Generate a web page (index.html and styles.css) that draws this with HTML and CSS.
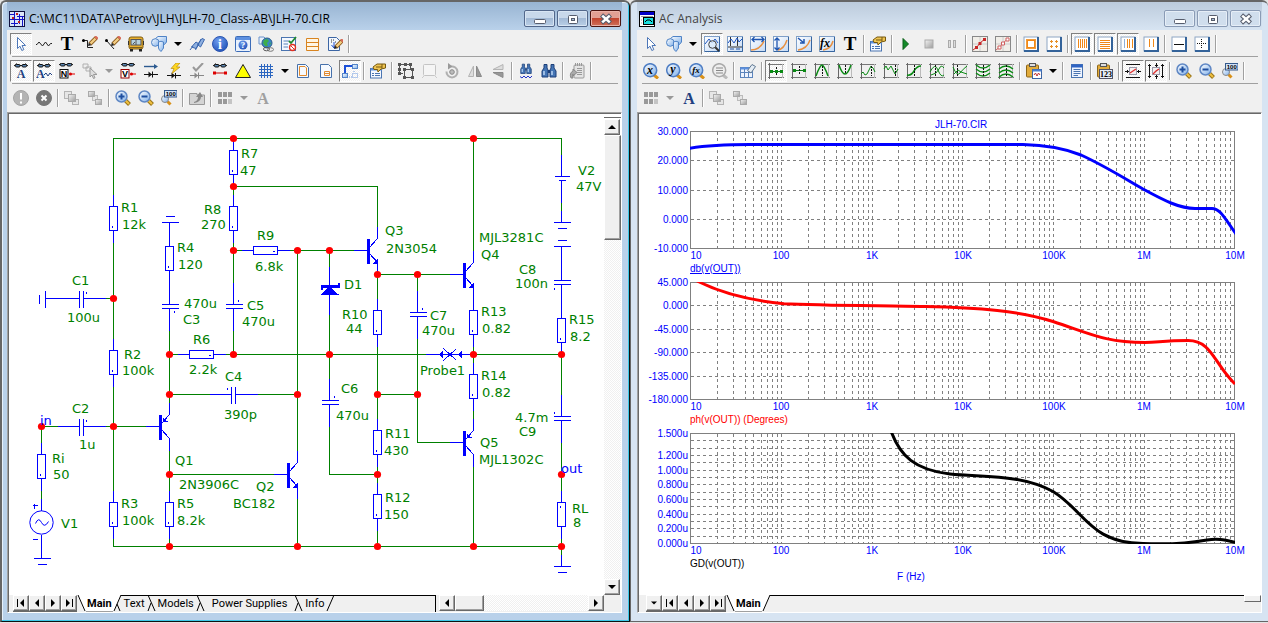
FILE: index.html
```html
<!DOCTYPE html>
<html lang="en">
<head>
<meta charset="utf-8">
<title>Micro-Cap 11</title>
<link rel="stylesheet" href="styles.css">
</head>
<body>
<svg class="defs" aria-hidden="true">
  <defs>
    <linearGradient id="g-blue" x1="0" y1="0" x2="1" y2="1"><stop offset="0" stop-color="#fff"/><stop offset="1" stop-color="#7fb0ea"/></linearGradient>
    <linearGradient id="g-paper" x1="0" y1="0" x2="1" y2="1"><stop offset="0" stop-color="#fff"/><stop offset="1" stop-color="#c4daf6"/></linearGradient>
    <linearGradient id="g-grey" x1="0" y1="0" x2="1" y2="1"><stop offset="0" stop-color="#f4f4f4"/><stop offset="1" stop-color="#9c9c9c"/></linearGradient>
    <radialGradient id="g-ball" cx=".4" cy=".3" r=".8"><stop offset="0" stop-color="#6f9ff0"/><stop offset="1" stop-color="#1c4cb4"/></radialGradient>

    <symbol id="pencil" viewBox="0 0 16 16"><path d="M14 2L8 8" stroke="#8a5a1c" stroke-width="4"/><path d="M13.500 2.500L8.500 7.500" stroke="#f3cd84" stroke-width="2.400"/><path d="M15.200 .8L13.600 2.400" stroke="#d86a58" stroke-width="4"/><path d="M6 10l.8-3.400 2.600 2.600z" fill="#222"/></symbol>
    <symbol id="lens" viewBox="0 0 16 16"><path d="M10.500 10.500L14.500 14.500" stroke="#9a7418" stroke-width="4"/><path d="M10.500 10.500L14 14" stroke="#f0c040" stroke-width="2"/><circle cx="6.500" cy="6.500" r="5.500" fill="url(#g-blue)" stroke="#5f87c4" stroke-width="1.500"/></symbol>
    <symbol id="specs" viewBox="0 0 16 16"><path d="M1 4L4 1.500M15 4L12 1.500M6 3.500H10" stroke="#111" fill="none"/><rect x="2.500" y="2.500" width="4.500" height="2.500" rx="1" fill="#5a86b4" stroke="#111"/><rect x="9" y="2.500" width="4.500" height="2.500" rx="1" fill="#5a86b4" stroke="#111"/></symbol>
    <symbol id="plot" viewBox="0 0 16 16"><rect x=".5" y=".5" width="15" height="15" fill="url(#g-paper)" stroke="#7f9fc8"/><path d="M15.500 1V15.500H1" stroke="#37659f" fill="none"/></symbol>
    <symbol id="tile" viewBox="0 0 16 16"><rect x="1" y="1" width="14" height="14" fill="#fff" stroke="#8ea6c4"/><path d="M15 1V15H1" stroke="#34639a" stroke-width="2" fill="none"/></symbol>
    <symbol id="axes" viewBox="0 0 16 16"><path d="M0 1.500H16M0 14.500H16" stroke="#777"/><path d="M1.500 0V16" stroke="#666"/><path d="M14.500 1V15" stroke="#bbb"/></symbol>
    <symbol id="clip" viewBox="0 0 16 16"><rect x=".5" y="2" width="12" height="12" rx="1" fill="#e2ac3c" stroke="#8d6618"/><rect x="3.500" y=".5" width="6" height="3" fill="#ddd" stroke="#555"/></symbol>

    <symbol id="i-cursor" viewBox="0 0 16 16"><path d="M4.500 1.500V12.500L7 10.200 8.800 14.500 10.800 13.600 9 9.500H12.500Z" fill="#fff" stroke="#4c76b8"/></symbol>
    <symbol id="i-wave" viewBox="0 0 16 16"><path d="M0 8.500H1L3 6L6.500 10L9.500 6L12.500 10L14.500 7.500H16" fill="none" stroke="#222"/></symbol>
    <symbol id="i-t" viewBox="0 0 16 16"><text x="8" y="14" text-anchor="middle" class="glyph t">T</text></symbol>
    <symbol id="i-wire" viewBox="0 0 16 16"><path d="M0 4.500H5.500V11.500H11" stroke="#222" fill="none"/><circle cx="1.500" cy="4.500" r="1.500"/><use href="#pencil"/></symbol>
    <symbol id="i-diag" viewBox="0 0 16 16"><path d="M1 4L9 13" stroke="#222"/><circle cx="1.500" cy="4.500" r="1.500"/><use href="#pencil"/></symbol>
    <symbol id="i-bus" viewBox="0 0 16 16"><rect x="1" y="1" width="14" height="12" rx="2" fill="#eab02c" stroke="#7d5a10"/><rect x="3" y="3.500" width="10" height="5.500" fill="#b5d0dc" stroke="#555"/><path d="M8 4V9M5 8l2-2" stroke="#555"/><path d="M.5 5V9M15.500 5V9" stroke="#333"/><path d="M2 11.500H14" stroke="#7a6020"/><path d="M3.500 13V15.500M12.500 13V15.500" stroke="#222" stroke-width="3"/></symbol>
    <symbol id="i-shapes" viewBox="0 0 16 16"><path d="M4.500 2.500L7 .5H15.500V6L13.500 8.500H4.500Z" fill="url(#g-blue)" stroke="#4f83c6"/><circle cx="4.300" cy="6.500" r="3.800" fill="url(#g-blue)" stroke="#4f83c6"/><path d="M7.500 6Q10 4.500 12.500 6V12Q12 13 10 15.500 8 14 7.500 12Z" fill="url(#g-blue)" stroke="#4f83c6"/></symbol>
    <symbol id="i-flag" viewBox="0 0 16 16"><path d="M2.500 11L7 6l3 2-3 4.500zM8.500 8.500L13 2.500l2.500 1-4 7.500z" fill="#8fb0e0" stroke="#3a66ae"/><path d="M1 14L4 10M6.500 14L12 3" stroke="#3a66ae"/></symbol>
    <symbol id="i-info" viewBox="0 0 16 16"><circle cx="8" cy="8" r="7.500" fill="url(#g-ball)" stroke="#2b55b0"/><text x="8" y="13" text-anchor="middle" class="glyph info">i</text></symbol>
    <symbol id="i-help" viewBox="0 0 16 16"><rect x=".5" y=".5" width="15" height="15" rx="1" fill="#e9f1fc" stroke="#3c6cb8"/><path d="M1 2.500H15" stroke="#5d90e0" stroke-width="3"/><circle cx="8" cy="9" r="4.500" fill="url(#g-ball)"/><text x="8" y="12" text-anchor="middle" class="glyph small inv">?</text></symbol>
    <symbol id="i-globe" viewBox="0 0 16 16"><path d="M1 1H6L8 3V8H1Z" fill="#e9f1fc" stroke="#6a93cc"/><circle cx="9" cy="7" r="5" fill="#3a86c8" stroke="#2b5f8a"/><path d="M6 4l3-1 2 2-2 2 1 3-3 0-2-3zM12 6l1 2-2 1z" fill="#3fae4a"/><ellipse cx="8.500" cy="13" rx="3" ry="1.800" fill="none" stroke="#555"/><ellipse cx="12.500" cy="13.500" rx="3" ry="1.800" fill="none" stroke="#777"/></symbol>
    <symbol id="i-check" viewBox="0 0 16 16"><rect x=".5" y="1.500" width="14" height="13" fill="#f5f9ff" stroke="#4a74b0"/><path d="M2.500 5H8M2.500 8H7M2.500 11H7" stroke="#5b84bc"/><path d="M8 5l2 2 5-6" stroke="#1f8a2c" stroke-width="1.800" fill="none"/><circle cx="11.500" cy="11.500" r="3" fill="#fff" stroke="#e03020" stroke-width="1.300"/><path d="M9.500 9.500l4 4" stroke="#e03020"/></symbol>
    <symbol id="i-rows" viewBox="0 0 16 16"><path d="M2.500 2.500H14.500V14.500H2.500ZM2.500 6.500H14.500M2.500 10.500H14.500" fill="#fff6e4" stroke="#d88420"/></symbol>
    <symbol id="i-docpen" viewBox="0 0 16 16"><path d="M1.500 1.500H9.500L12.500 4.500V14.500H1.500Z" fill="#f2f7ff" stroke="#3c66a4"/><path d="M4 4h1M6 4h1M4 6h1M8 6h1" stroke="#333"/><path d="M7 6V11M4.500 9L7 12 9.500 9" stroke="#2050d0" fill="none"/><use href="#pencil" x="1" y="3" width="16" height="16"/></symbol>

    <symbol id="i-spec-a" viewBox="0 0 16 16"><use href="#specs" y="-1" width="16" height="16"/><text x="8" y="15" text-anchor="middle" class="glyph mid navy">A</text></symbol>
    <symbol id="i-spec-aw" viewBox="0 0 16 16"><use href="#specs" y="-1" width="16" height="16"/><text x="0" y="15" class="glyph mid navy">A</text><path d="M8 12l2-2 2 3 2-3 2 2" stroke="#1f3f80" fill="none"/></symbol>
    <symbol id="i-spec-n" viewBox="0 0 16 16"><use href="#specs" x="-1" y="-2" width="16" height="16"/><rect x="1" y="6.500" width="8" height="8.500" fill="#fff" stroke="#111"/><text x="5" y="14" text-anchor="middle" class="glyph sans">N</text><path d="M10 11H16" stroke="#d00"/><circle cx="11.500" cy="11" r="1.500" fill="#d00"/></symbol>
    <symbol id="i-spec-v" viewBox="0 0 16 16"><use href="#specs" x="0" y="-2" width="16" height="16"/><rect x="1" y="6.500" width="8" height="8.500" fill="#fff" stroke="#900"/><text x="5" y="14" text-anchor="middle" class="glyph sans">V</text><path d="M10 11H16" stroke="#d00"/><circle cx="11.500" cy="11" r="1.500" fill="#d00"/></symbol>
    <symbol id="i-copycur" viewBox="0 0 16 16"><path d="M1 1H6V5H1ZM4 4H9V8H4Z" fill="#eee" stroke="#b0b0b0"/><path d="M8 5V14l2-2 1.500 3.500 1.500-.7L11.500 11.500H15Z" fill="#ddd" stroke="#999"/></symbol>
    <symbol id="i-current" viewBox="0 0 16 16"><path d="M1 3.500H12" stroke="#2b5a90" stroke-width="1.400"/><path d="M11 1l4 2.500L11 6z" fill="#2b5a90"/><path d="M1 11.500H15M9.500 8.500V14.500" stroke="#111"/><path d="M5.500 8.500l3.500 3-3.500 3z" fill="#111"/></symbol>
    <symbol id="i-power" viewBox="0 0 16 16"><path d="M1 12.500H15M9.500 10V15.500" stroke="#111"/><path d="M5.500 9.500l3.500 3-3.500 3z" fill="#111"/><path d="M10 0L5 5.500H8L6 10.500 14 4H10.500L14 0Z" fill="#ffd820" stroke="#b88a10" stroke-width=".7"/></symbol>
    <symbol id="i-cond" viewBox="0 0 16 16"><path d="M1 12.500H15M9.500 9.500V15.500" stroke="#888"/><path d="M5.500 9.500l3.500 3-3.500 3z" fill="#888"/><path d="M4 4l3 3.500L14 0" stroke="#999" stroke-width="2" fill="none"/></symbol>
    <symbol id="i-pins" viewBox="0 0 16 16"><use href="#specs" width="16" height="16" y="-1"/><path d="M2 10H14" stroke="#c00"/><path d="M1 8.500h3v3h-3zM12 8.500h3v3h-3z" fill="#d00"/></symbol>
    <symbol id="i-tri" viewBox="0 0 16 16"><path d="M8 1.500L15.500 14.500H.5Z" fill="#ff0" stroke="#222"/></symbol>
    <symbol id="i-grid" viewBox="0 0 16 16"><path d="M3.500 1V15M6.500 1V15M9.500 1V15M12.500 1V15M1 3.500H15M1 6.500H15M1 9.500H15M1 12.500H15" stroke="#2c66c0"/></symbol>
    <symbol id="i-page" viewBox="0 0 16 16"><path d="M1.500 1.500H9.500L12.500 4.500V14.500H1.500Z" fill="#f6faff" stroke="#4671ab"/><path d="M3.500 3.500H9L10.500 5V12.500H3.500Z" fill="none" stroke="#e08a30"/></symbol>
    <symbol id="i-title" viewBox="0 0 16 16"><path d="M1.500 1.500H9.500L12.500 4.500V14.500H1.500Z" fill="#f6faff" stroke="#4671ab"/><path d="M5.500 8.500H10.500V12.500H5.500ZM5.500 10.500H10.500" fill="none" stroke="#e08a30"/></symbol>
    <symbol id="i-net" viewBox="0 0 16 16"><path d="M3 11V3H11" stroke="#1c50d8" stroke-width="2" fill="none"/><rect x="10.500" y="1.500" width="5" height="4" fill="url(#g-blue)" stroke="#5484c8"/><rect x=".5" y="10.500" width="5" height="4" fill="url(#g-blue)" stroke="#5484c8"/><path d="M7 14H10M12 8V10M10.500 10.500H15.500V14.500H10.500Z" stroke="#6f9ae0" stroke-dasharray="1 1" fill="none"/></symbol>
    <symbol id="i-props" viewBox="0 0 16 16"><rect x=".5" y="5.500" width="11" height="9.500" fill="#f4f8ff" stroke="#4a74b0"/><path d="M1 6.500H12" stroke="#5d90e0" stroke-width="2"/><path d="M2 10.500H4M5 10.500H10M2 12.500H4M5 12.500H10" stroke="#4a74b0"/><path d="M3 4L7 1H15.500V5L11 6 8 9 7.500 6.500H4Z" fill="#eec452" stroke="#76590e"/><path d="M6 4h6M12 1v4" stroke="#76590e"/></symbol>
    <symbol id="i-group" viewBox="0 0 16 16"><path d="M1.500 1.500H12.500V6M1.500 2V10.500H5M6.500 6.500H14.500V14.500H6.500Z" fill="none" stroke="#555"/><path d="M0 0h3v3h-3zM6 0h3v3h-3zM11 0h3v3h-3zM0 5h3v3h-3zM0 9h3v3h-3zM5 5h3v3h-3zM13 5h3v3h-3zM5 13h3v3h-3zM13 13h3v3h-3z" fill="#555"/></symbol>
    <symbol id="i-box" viewBox="0 0 16 16"><rect x="2.500" y="1.500" width="12" height="11" rx="1" fill="#f5f5f5" stroke="#c4c4c4"/><path d="M1 15l2-2M16 15l-2-2" stroke="#ccc"/></symbol>
    <symbol id="i-rotate" viewBox="0 0 16 16"><path d="M7 3.500a5.500 5.500 0 1 1-4.500 5" fill="none" stroke="#b0b0b0" stroke-width="2"/><path d="M4 0L8.500 3.500 4 6.500z" fill="#999"/><circle cx="8" cy="9" r="2.300" fill="#bbb" stroke="#888"/></symbol>
    <symbol id="i-mirror" viewBox="0 0 16 16"><path d="M6.500 3V13.500H1.500Z" fill="#ddd" stroke="#b4b4b4"/><path d="M9.500 3V13.500H14.500Z" fill="#999" stroke="#8a8a8a"/></symbol>
    <symbol id="i-flip" viewBox="0 0 16 16"><path d="M13 1.500V6.500H3Z" fill="#ddd" stroke="#b4b4b4"/><path d="M13 14.500V9.500H3Z" fill="#999" stroke="#8a8a8a"/></symbol>
    <symbol id="bino" viewBox="0 0 16 16"><path d="M3 1.500H6V5L7 7V14H1V8L3 5ZM10 1.500H13V5L15 8V14H9V7L10 5Z" fill="#4474b4" stroke="#1c3f78"/><path d="M3 8V12M11 8V12" stroke="#b9d4f4" stroke-width="1.500"/><path d="M7 7H9V10H7Z" fill="#1c3f78"/></symbol>
    <symbol id="i-findw" viewBox="0 0 16 16"><use href="#bino" x="2" y="0" width="12" height="12"/><path d="M2 13.500l2 1.500 2-2 2 2 2-2 2 2 2-2" stroke="#2233c8" fill="none"/></symbol>
    <symbol id="i-note" viewBox="0 0 16 16"><rect x="5" y="2" width="10" height="13" rx="1" fill="#e4e4e4" stroke="#9a9a9a"/><path d="M6.500 0V3M8.500 0V3M10.500 0V3M12.500 0V3M8 5.500H13M8 7.500H13M8 9.500H13M8 11.500H13" stroke="#999"/><path d="M2 15Q0 10 4 8V6L8 9.500 4 13V11Q3 12 4 15z" fill="#aaa" stroke="#888"/></symbol>

    <symbol id="i-bang" viewBox="0 0 16 16"><circle cx="8" cy="8" r="7.500" fill="#b4b4b4" stroke="#a4a4a4"/><path d="M8 3V9.500M8 11.500V13.500" stroke="#fff" stroke-width="2"/></symbol>
    <symbol id="i-stop" viewBox="0 0 16 16"><circle cx="8" cy="8" r="7.500" fill="#777" stroke="#777"/><path d="M5.500 5.500L10.500 10.500M10.500 5.500L5.500 10.500" stroke="#fff" stroke-width="2"/></symbol>
    <symbol id="i-front" viewBox="0 0 16 16"><rect x=".5" y="1.500" width="7" height="7" fill="#e6e6e6" stroke="#b4b4b4"/><rect x="8.500" y="9.500" width="6" height="5" fill="#e6e6e6" stroke="#b4b4b4"/><rect x="4.500" y="4.500" width="7" height="7" fill="url(#g-grey)" stroke="#aaa"/></symbol>
    <symbol id="i-back" viewBox="0 0 16 16"><rect x="5.500" y="5.500" width="5" height="5" fill="#e6e6e6" stroke="#bbb"/><rect x="1.500" y="1.500" width="6" height="5" fill="url(#g-grey)" stroke="#aaa"/><rect x="8.500" y="9.500" width="6" height="5" fill="url(#g-grey)" stroke="#aaa"/></symbol>
    <symbol id="i-zin" viewBox="0 0 16 16"><use href="#lens"/><path d="M3.500 6.500H9.500M6.500 3.500V9.500" stroke="#1f4fa0" stroke-width="2"/></symbol>
    <symbol id="i-zout" viewBox="0 0 16 16"><use href="#lens"/><path d="M3.500 6.500H9.500" stroke="#1f4fa0" stroke-width="2"/></symbol>
    <symbol id="i-z100" viewBox="0 0 16 16"><path d="M6.500 11.500L9.500 14.500" stroke="#d89018" stroke-width="3"/><circle cx="4" cy="9" r="3.500" fill="url(#g-blue)" stroke="#888"/><rect x="3.500" y=".5" width="12.500" height="6.500" fill="#cfe0f8" stroke="#34598c"/><text x="9.800" y="6.300" text-anchor="middle" class="glyph tiny">100</text></symbol>
    <symbol id="i-up" viewBox="0 0 16 16"><path d="M.5 3.500H8V5H15.500V14.500H.5Z" fill="#d4d4d4" stroke="#999"/><path d="M5 12Q9 11 9 7H7L11 2 14 7H12Q12 12 5 13Z" fill="#888"/></symbol>
    <symbol id="i-cells" viewBox="0 0 16 16"><path d="M1 2h4v5h-4zM6 2h4v5h-4zM11 2h4v5h-4zM1 9h4v5h-4zM6 9h4v5h-4z" fill="#999"/><path d="M11 9h4v5h-4z" fill="#c4c4c4"/></symbol>
    <symbol id="i-a-grey" viewBox="0 0 16 16"><text x="8" y="14" text-anchor="middle" class="glyph a grey">A</text></symbol>
    <symbol id="i-a" viewBox="0 0 16 16"><text x="8" y="14" text-anchor="middle" class="glyph a navy">A</text></symbol>

    <symbol id="i-pzoom" viewBox="0 0 16 16"><use href="#plot"/><path d="M1 8L5 3 8 7 11 3 14 7" stroke="#1f55c0" fill="none"/><path d="M11 11L15 15" stroke="#333" stroke-width="2"/><circle cx="8.500" cy="8.500" r="3.800" fill="#dcebfc" fill-opacity=".85" stroke="#444"/></symbol>
    <symbol id="i-pcur" viewBox="0 0 16 16"><use href="#plot"/><path d="M3.500 1V10M10.500 1V10M1 11H15" stroke="#333"/><path d="M1 7L4 3 7 7 10 2 12 6 15 3" stroke="#1f55c0" fill="none"/><path d="M3 13H7M9 13H13" stroke="#1f4fa0"/></symbol>
    <symbol id="i-ph" viewBox="0 0 16 16"><use href="#plot"/><path d="M1 14Q10 14 14 5" stroke="#e89040" stroke-width="1.500" fill="none"/><path d="M2 3.500H14M4.500 1L2 3.500 4.500 6M11.500 1L14 3.500 11.500 6" stroke="#1f55b0" stroke-width="1.300" fill="none"/></symbol>
    <symbol id="i-pv" viewBox="0 0 16 16"><use href="#plot"/><path d="M5 14Q11 13 14 4" stroke="#e89040" stroke-width="1.500" fill="none"/><path d="M4 2V14M1.500 4.500L4 2 6.500 4.500M1.500 11.500L4 14 6.500 11.500" stroke="#1f55b0" stroke-width="1.300" fill="none"/></symbol>
    <symbol id="i-pt" viewBox="0 0 16 16"><use href="#plot"/><path d="M2 14Q11 13 14 4" stroke="#e89040" stroke-width="1.500" fill="none"/><path d="M2 2L8 7M8 3V7H4" stroke="#1f55b0" stroke-width="1.500" fill="none"/></symbol>
    <symbol id="i-pf" viewBox="0 0 16 16"><use href="#plot"/><path d="M4 14Q12 13 14 5" stroke="#e89040" stroke-width="1.500" fill="none"/><text x="1" y="11" class="glyph mid it">fx</text></symbol>
    <symbol id="i-play" viewBox="0 0 16 16"><path d="M5 2.500V13.500L10.500 8Z" fill="#138a28" stroke="#0b5e18"/></symbol>
    <symbol id="i-halt" viewBox="0 0 16 16"><rect x="4" y="4" width="8" height="8" fill="url(#g-grey)" stroke="#aaa"/></symbol>
    <symbol id="i-pause" viewBox="0 0 16 16"><path d="M5.500 4V12M10.500 4V12" stroke="#aaa" stroke-width="3"/><path d="M5.500 5V11M10.500 5V11" stroke="#ddd"/></symbol>
    <symbol id="i-dots" viewBox="0 0 16 16"><rect x=".5" y=".5" width="15" height="15" fill="#f1eee8" stroke="#888"/><path d="M8 1V15M1 8H15" stroke="#ccc"/><path d="M1 14L5 11 8 7 14 2" stroke="#c82828" fill="none"/><path d="M3 10h3v3h-3zM6.500 6h3v3h-3zM11 2h3v3h-3z" fill="#c82828"/></symbol>
    <symbol id="i-rings" viewBox="0 0 16 16"><rect x=".5" y=".5" width="15" height="15" fill="#f1eee8" stroke="#888"/><path d="M8 1V15M1 8H15" stroke="#ccc"/><path d="M1 14L5 11 8 7 14 2" stroke="#d06060" fill="none"/><path d="M3 10h3v3h-3zM6.500 6h3v3h-3zM11 2h3v3h-3z" fill="#fff" stroke="#d06060"/></symbol>
    <symbol id="i-region" viewBox="0 0 16 16"><use href="#tile"/><rect x="4" y="4" width="8" height="8" fill="#fff" stroke="#f08818" stroke-width="2"/><rect x="3.500" y="3.500" width="9" height="9" fill="none" stroke="#f4b060" stroke-dasharray="1 1"/></symbol>
    <symbol id="i-plus4" viewBox="0 0 16 16"><use href="#tile"/><path d="M4 5.500H7M5.500 4V7M9 5.500H12M10.500 4V7M4 10.500H7M5.500 9V12M9 10.500H12M10.500 9V12" stroke="#e89028"/></symbol>
    <symbol id="i-vbars" viewBox="0 0 16 16"><use href="#tile"/><path d="M4.500 3V12M6.500 3V12M8.500 3V12M10.500 3V12M12.500 3V12" stroke="#f08818"/></symbol>
    <symbol id="i-hbars" viewBox="0 0 16 16"><use href="#tile"/><path d="M3 4.500H13M3 6.500H13M3 8.500H13M3 10.500H13M3 12.500H13" stroke="#f08818"/></symbol>
    <symbol id="i-logbars" viewBox="0 0 16 16"><use href="#tile"/><path d="M4.500 3V12" stroke="#8fb0da"/><path d="M7.500 3V12M9.500 3V12M12.500 3V12" stroke="#f08818"/></symbol>
    <symbol id="i-2bars" viewBox="0 0 16 16"><use href="#tile"/><path d="M6.500 3V11M10.500 3V11" stroke="#f08818"/></symbol>
    <symbol id="i-base" viewBox="0 0 16 16"><use href="#tile"/><path d="M3 8.500H13" stroke="#111"/></symbol>
    <symbol id="i-cross" viewBox="0 0 16 16"><use href="#tile"/><path d="M3 7.500H13M7.500 3V13" stroke="#111" stroke-dasharray="1 1"/></symbol>

    <symbol id="i-ball" viewBox="0 0 16 16"><path d="M11 12L15 15.500" stroke="#d89018" stroke-width="3"/><circle cx="7.200" cy="7.200" r="6.500" fill="url(#g-blue)" stroke="#4f7ec4" stroke-width="1.500"/></symbol>
    <symbol id="i-lx" viewBox="0 0 16 16"><use href="#i-ball"/><text x="7" y="11" text-anchor="middle" class="glyph mid it">x</text></symbol>
    <symbol id="i-ly" viewBox="0 0 16 16"><use href="#i-ball"/><text x="7" y="10" text-anchor="middle" class="glyph mid it">y</text></symbol>
    <symbol id="i-lf" viewBox="0 0 16 16"><use href="#i-ball"/><text x="7" y="10" text-anchor="middle" class="glyph small it">fx</text></symbol>
    <symbol id="i-ll" viewBox="0 0 16 16"><path d="M11 12L15 15.500" stroke="#bbb" stroke-width="3"/><circle cx="7.200" cy="7.200" r="6.500" fill="#eee" stroke="#aaa" stroke-width="1.500"/><path d="M4 5H11M4 7.500H11M4 10H11" stroke="#888"/></symbol>
    <symbol id="i-erase" viewBox="0 0 16 16"><rect x=".5" y="4.500" width="12" height="10" fill="#eef4ff" stroke="#5b84bc"/><path d="M.5 5.500H12.500" stroke="#5d90e0" stroke-width="2"/><path d="M.5 9.500H12.500M4.500 6V14M8.500 6V14" stroke="#5b84bc"/><path d="M7.500 7.500L12 1.500 15.500 3.500 11 10Z" fill="#e4ecf4" stroke="#5f7893"/></symbol>
    <symbol id="i-c1" viewBox="0 0 16 16"><use href="#axes"/><path d="M2 8.500H15" stroke="#0a7a14"/><path d="M8.500 4V12" stroke="#111" stroke-dasharray="2 1"/><path d="M2 7h3v3h-3zM7 7h3v3h-3zM12 7h3v3h-3z" fill="#0a8a14"/></symbol>
    <symbol id="i-c2" viewBox="0 0 16 16"><use href="#axes"/><path d="M2 7.500H15" stroke="#0a7a14"/><path d="M8.500 3V11" stroke="#111" stroke-dasharray="2 1"/><path d="M2 6h3v3h-3zM12 6h3v3h-3z" fill="#0a8a14"/></symbol>
    <symbol id="i-c3" viewBox="0 0 16 16"><use href="#axes"/><path d="M2 13Q6 2 8 2T14 13" stroke="#0a8a14" stroke-width="1.500" fill="none"/><path d="M8.500 3V13" stroke="#111" stroke-dasharray="2 1"/></symbol>
    <symbol id="i-c4" viewBox="0 0 16 16"><use href="#axes"/><path d="M2 2Q5 11 8 11T14 2" stroke="#0a8a14" stroke-width="1.500" fill="none"/><path d="M8.500 2V11" stroke="#111" stroke-dasharray="2 1"/></symbol>
    <symbol id="i-c5" viewBox="0 0 16 16"><use href="#axes"/><path d="M1 11l2-2 2 3 2-1 4-8 2 2 2 4" stroke="#0a8a14" fill="none"/><path d="M11.500 3V13" stroke="#111" stroke-dasharray="2 1"/></symbol>
    <symbol id="i-c6" viewBox="0 0 16 16"><use href="#axes"/><path d="M1 6l2-3 2 4 3-4 4 8 3-5" stroke="#0a8a14" fill="none"/><path d="M12.500 2V13" stroke="#111" stroke-dasharray="2 1"/></symbol>
    <symbol id="i-c7" viewBox="0 0 16 16"><use href="#axes"/><path d="M1 12Q5 13 8 8T15 3" stroke="#0a8a14" stroke-width="1.500" fill="none"/><path d="M8.500 2V14" stroke="#111" stroke-dasharray="2 1"/></symbol>
    <symbol id="i-c8" viewBox="0 0 16 16"><use href="#axes"/><path d="M1 9Q6 -1 9 7T15 12M2 12Q8 11 10 6T15 5" stroke="#0a8a14" fill="none"/><path d="M6.500 2V14" stroke="#111" stroke-dasharray="2 1"/></symbol>
    <symbol id="i-c9" viewBox="0 0 16 16"><use href="#axes"/><path d="M1 4Q5 14 8 10T15 3M2 11L6 7 9 9 15 11" stroke="#0a8a14" fill="none"/><path d="M5.500 2V14" stroke="#111" stroke-dasharray="2 1"/></symbol>
    <symbol id="i-c10" viewBox="0 0 16 16"><use href="#axes"/><path d="M1 2Q8 8 15 2M1 6Q8 12 15 6M1 10Q8 16 15 10" stroke="#0a8a14" stroke-width="1.300" fill="none"/><path d="M8.500 2V14" stroke="#111" stroke-dasharray="2 1"/></symbol>
    <symbol id="i-c11" viewBox="0 0 16 16"><use href="#axes"/><path d="M1 6Q8 0 15 6M1 10Q8 4 15 10M1 14Q8 8 15 14" stroke="#0a8a14" stroke-width="1.300" fill="none"/><path d="M8.500 2V14" stroke="#111" stroke-dasharray="2 1"/></symbol>
    <symbol id="i-paste" viewBox="0 0 16 16"><use href="#clip"/><rect x="6.500" y="6.500" width="9" height="9" fill="#fff" stroke="#3c66a4"/><path d="M6.500 7.500H15.500" stroke="#4d80d0" stroke-width="2"/><path d="M8 12l1.500-2 1.500 3 1.500-3 1.500 2" stroke="#c03030" fill="none"/></symbol>
    <symbol id="i-list" viewBox="0 0 16 16"><rect x="2.500" y="1.500" width="11" height="13" fill="#eef4ff" stroke="#4a74b0"/><path d="M2.500 3H13.500" stroke="#2f64c4" stroke-width="3"/><path d="M4.500 6.500H11.500M4.500 8.500H11.500M4.500 10.500H11.500M4.500 12.500H9" stroke="#4a74b0"/></symbol>
    <symbol id="i-123" viewBox="0 0 16 16"><use href="#clip"/><rect x="2.500" y="6.500" width="13" height="9" fill="#e8eef8" stroke="#556"/><text x="9" y="14" text-anchor="middle" class="glyph num">123</text></symbol>
    <symbol id="i-hlim" viewBox="0 0 16 16"><path d="M1 1.500H15M1 14.500H15M0 8.500H4M12 8.500H16M2.500 7V10M13.500 7V10" stroke="#111"/><rect x="4.500" y="4.500" width="7" height="7" fill="#f4f0f0" stroke="#99a"/><path d="M5 10L8 8 11 6" stroke="#e03030" stroke-width="1.300"/></symbol>
    <symbol id="i-vlim" viewBox="0 0 16 16"><path d="M1.500 1V15M14.500 1V15M8.500 0V4M8.500 12V16M7 2.500H10M7 13.500H10M0 2.500H3M13 2.500H16M0 13.500H3M13 13.500H16" stroke="#111"/><rect x="4.500" y="4.500" width="7" height="7" fill="#f4f0f0" stroke="#99a"/><path d="M5 11L8 8 11 6" stroke="#e03030" stroke-width="1.300"/></symbol>

    <symbol id="i-caret" viewBox="0 0 8 4"><path d="M0 0H8L4 4Z" fill="currentColor"/></symbol>
    <symbol id="i-tri-l" viewBox="0 0 8 8"><path d="M6 0V8L2 4Z"/></symbol>
    <symbol id="i-tri-r" viewBox="0 0 8 8"><path d="M2 0V8L6 4Z"/></symbol>
    <symbol id="i-tri-u" viewBox="0 0 8 8"><path d="M0 6H8L4 2Z"/></symbol>
    <symbol id="i-tri-d" viewBox="0 0 8 8"><path d="M0 2H8L4 6Z"/></symbol>
    <symbol id="i-first" viewBox="0 0 8 8"><path d="M7 0V8L3 4Z M0 0H1V8H0Z"/></symbol>
    <symbol id="i-last" viewBox="0 0 8 8"><path d="M1 0V8L5 4Z M7 0H8V8H7Z"/></symbol>
    <symbol id="i-min" viewBox="0 0 12 12"><rect x=".5" y="6.500" width="11" height="4" rx="1" fill="#fff" stroke="#565d6d"/></symbol>
    <symbol id="i-max" viewBox="0 0 12 12"><rect x="1.500" y="2.500" width="9" height="8" rx="1" fill="#fff" stroke="#565d6d"/><rect x="4.500" y="5.500" width="3" height="2" fill="#a9bdd8" stroke="#565d6d"/></symbol>
    <symbol id="i-close" viewBox="0 0 12 12"><path d="M1.500 2L10.500 10M10.500 2L1.500 10" stroke="#565d6d" stroke-width="4.600"/><path d="M2.200 2.600L9.800 9.400M9.800 2.600L2.200 9.400" stroke="#fff" stroke-width="2.600"/></symbol>

    <!-- schematic parts, each centred on its own origin -->
    <g id="res"><path d="M0-24V-12M0 12V24M-4-12H4V12H-4ZM-1 7V9"/></g>
    <g id="cap"><path d="M0-24V-2M0 2V24M-8-2H9M-8 2H9"/></g>
    <g id="npn"><path d="M-24 0H-10M-8-3L0-12V-24M-8 3L0 12V24"/><path class="solid" d="M-11-12H-8V13H-11ZM0 8V13H-5Z"/></g>
    <g id="pnp"><path d="M-24 0H-10M-8-3L0-12V-24M-8 3L0 12V24"/><path class="solid" d="M-11-12H-8V13H-11ZM-7-9V-4L-2-5Z"/></g>
    <g id="gnd"><path d="M-8 0H9M-4 6H5"/></g>
    <circle id="node" r="3.600"/>
    <path id="decade" d="M27 0V117M43 0V117M55 0V117M63 0V117M71 0V117M77 0V117M82 0V117M87 0V117M91 0V117"/>
    <path id="decade-s" d="M27 0V110M43 0V110M55 0V110M63 0V110M71 0V110M77 0V110M82 0V110M87 0V110M91 0V110"/>
    <clipPath id="clip-a"><rect x="690" y="131" width="545" height="118"/></clipPath>
    <clipPath id="clip-b"><rect x="690" y="282" width="545" height="118"/></clipPath>
    <clipPath id="clip-c"><rect x="690" y="433" width="545" height="111"/></clipPath>
  </defs>
</svg>

<main class="desk">
<section class="win active" aria-label="Schematic">
  <header class="bar">
    <svg class="app" viewBox="0 0 16 16"><rect x=".5" y=".5" width="15" height="15" fill="#dce6f8" stroke="#101040"/><path d="M1 3.500H6M1 8.500H15M5.500 1V15M10.500 3V13M8 5.500H15M2 12.500H9M13.500 6V15" stroke="#1414c8" fill="none"/><path d="M3 6h2v2H3zM9 10h2v2H9zM7 2h2v2H7z" fill="#c02020"/></svg>
    <h1 class="title">C:\MC11\DATA\Petrov\JLH\JLH-70_Class-AB\JLH-70.CIR</h1>
    <button class="cap" aria-label="Minimize"><svg><use href="#i-min"/></svg></button>
    <button class="cap" aria-label="Restore"><svg><use href="#i-max"/></svg></button>
    <button class="cap close" aria-label="Close"><svg><use href="#i-close"/></svg></button>
  </header>
  <div class="client">
    <div class="tools lined">
      <button class="tb on" aria-label="Select"><svg><use href="#i-cursor"/></svg></button>
      <button class="tb" aria-label="Component"><svg><use href="#i-wave"/></svg></button>
      <button class="tb" aria-label="Text"><svg><use href="#i-t"/></svg></button>
      <button class="tb" aria-label="Wire"><svg><use href="#i-wire"/></svg></button>
      <button class="tb" aria-label="Diagonal wire"><svg><use href="#i-diag"/></svg></button>
      <button class="tb" aria-label="Bus"><svg><use href="#i-bus"/></svg></button>
      <button class="tb" aria-label="Graphics"><svg><use href="#i-shapes"/></svg></button>
      <button class="dd" aria-label="More graphics"><svg><use href="#i-caret"/></svg></button>
      <button class="tb" aria-label="Flag"><svg><use href="#i-flag"/></svg></button>
      <button class="tb" aria-label="Info"><svg><use href="#i-info"/></svg></button>
      <button class="tb" aria-label="Help"><svg><use href="#i-help"/></svg></button>
      <button class="tb" aria-label="Link"><svg><use href="#i-globe"/></svg></button>
      <button class="tb" aria-label="Enable"><svg><use href="#i-check"/></svg></button>
      <button class="tb" aria-label="Region"><svg><use href="#i-rows"/></svg></button>
      <button class="tb" aria-label="Edit page"><svg><use href="#i-docpen"/></svg></button>
      <span class="sep"></span>
    </div>
    <div class="tools lined">
      <button class="tb on" aria-label="Attribute text"><svg><use href="#i-spec-a"/></svg></button>
      <button class="tb on" aria-label="Grid text"><svg><use href="#i-spec-aw"/></svg></button>
      <button class="tb" aria-label="Node numbers"><svg><use href="#i-spec-n"/></svg></button>
      <button class="tb" aria-label="Copy cursor"><svg><use href="#i-copycur"/></svg></button>
      <button class="dd off" aria-label="More copy"><svg><use href="#i-caret"/></svg></button>
      <button class="tb" aria-label="Node voltages"><svg><use href="#i-spec-v"/></svg></button>
      <button class="tb" aria-label="Currents"><svg><use href="#i-current"/></svg></button>
      <button class="tb" aria-label="Power"><svg><use href="#i-power"/></svg></button>
      <button class="tb" aria-label="Conditions"><svg><use href="#i-cond"/></svg></button>
      <button class="tb" aria-label="Pins"><svg><use href="#i-pins"/></svg></button>
      <button class="tb" aria-label="Warnings"><svg><use href="#i-tri"/></svg></button>
      <button class="tb" aria-label="Grid"><svg><use href="#i-grid"/></svg></button>
      <button class="dd" aria-label="Grid options"><svg><use href="#i-caret"/></svg></button>
      <button class="tb" aria-label="Border"><svg><use href="#i-page"/></svg></button>
      <button class="tb" aria-label="Title block"><svg><use href="#i-title"/></svg></button>
      <button class="tb on" aria-label="Rubberbanding"><svg><use href="#i-net"/></svg></button>
      <span class="sep"></span>
      <button class="tb" aria-label="Properties"><svg><use href="#i-props"/></svg></button>
      <span class="sep"></span>
      <button class="tb" aria-label="Step box"><svg><use href="#i-group"/></svg></button>
      <button class="tb" aria-label="Box"><svg><use href="#i-box"/></svg></button>
      <button class="tb" aria-label="Rotate"><svg><use href="#i-rotate"/></svg></button>
      <button class="tb" aria-label="Mirror"><svg><use href="#i-mirror"/></svg></button>
      <button class="tb" aria-label="Flip"><svg><use href="#i-flip"/></svg></button>
      <span class="sep"></span>
      <button class="tb" aria-label="Find part"><svg><use href="#i-findw"/></svg></button>
      <button class="tb" aria-label="Find"><svg><use href="#bino"/></svg></button>
      <span class="sep"></span>
      <button class="tb" aria-label="Notes"><svg><use href="#i-note"/></svg></button>
      <span class="sep"></span>
    </div>
    <div class="tools">
      <button class="tb" aria-label="Errors"><svg><use href="#i-bang"/></svg></button>
      <button class="tb" aria-label="Clear errors"><svg><use href="#i-stop"/></svg></button>
      <span class="sep"></span>
      <button class="tb" aria-label="Bring to front"><svg><use href="#i-front"/></svg></button>
      <button class="tb" aria-label="Send to back"><svg><use href="#i-back"/></svg></button>
      <span class="sep"></span>
      <button class="tb" aria-label="Zoom in"><svg><use href="#i-zin"/></svg></button>
      <button class="tb" aria-label="Zoom out"><svg><use href="#i-zout"/></svg></button>
      <button class="tb" aria-label="Zoom 100"><svg><use href="#i-z100"/></svg></button>
      <span class="sep"></span>
      <button class="tb" aria-label="Up"><svg><use href="#i-up"/></svg></button>
      <span class="sep"></span>
      <button class="tb" aria-label="Color"><svg><use href="#i-cells"/></svg></button>
      <button class="dd off" aria-label="More colors"><svg><use href="#i-caret"/></svg></button>
      <button class="tb" aria-label="Font"><svg><use href="#i-a-grey"/></svg></button>
    </div>
    <div class="sheet"><div class="sheet-in">
      <div class="page">
        <div class="view">
        <svg class="circuit" viewBox="9 114 595 481" role="img" aria-label="Circuit diagram">
          <g class="wire">
            <path d="M113 194V138H561V154M233 186H377V226M233 186V194M233 242V282M233 250H241M289 250H353M297 250V450M329 250V266M113 242V338M105 298H113M473 138V250M377 274H449M377 274V298M417 274V290M377 346V418M417 338V442H449M377 394H417M169 330V402M169 354H177M225 354H425M233 330V354M329 314V378M473 354H561M473 346V362M169 394H209M257 394H297M41 426H57M105 426H145M41 426V442M41 490V498M113 386V490M113 538V546H561M169 450V490M169 474H273M169 538V546M297 498V546M329 426V474H377M377 466V482M377 530V546M473 410V418M473 466V546M561 202V210M561 354V394M561 442V490M561 538V554"/>
          </g>
          <g class="part">
            <use href="#res" x="233" y="162"/><use href="#res" x="113" y="218"/><use href="#res" x="233" y="218"/><use href="#res" x="169" y="258"/><use href="#res" x="113" y="362"/><use href="#res" x="113" y="514"/><use href="#res" x="169" y="514"/><use href="#res" x="41" y="466"/><use href="#res" x="377" y="322"/><use href="#res" x="473" y="322"/><use href="#res" x="473" y="386"/><use href="#res" x="377" y="442"/><use href="#res" x="377" y="506"/><use href="#res" x="561" y="330"/>
            <use href="#res" transform="translate(561 514) scale(1 -1)"/>
            <use href="#res" transform="translate(265 250) rotate(-90)"/><use href="#res" transform="translate(201 354) rotate(-90)"/>
            <use href="#cap" x="169" y="306"/><use href="#cap" x="233" y="306"/><use href="#cap" x="417" y="314"/><use href="#cap" x="329" y="402"/><use href="#cap" x="561" y="282"/><use href="#cap" x="561" y="418"/>
            <use href="#cap" transform="translate(81 298) rotate(90)"/><use href="#cap" transform="translate(81 426) rotate(90)"/><use href="#cap" transform="translate(233 394) rotate(90)"/>
            <path d="M86 291V293M86 419V421M227 387V389M174 310V312M238 299V301M422 307V309M334 395V397M554 287V289M554 411V413"/>
            <use href="#npn" x="377" y="250"/><use href="#npn" x="473" y="274"/><use href="#npn" x="297" y="474"/><use href="#pnp" x="169" y="426"/><use href="#pnp" x="473" y="442"/>
            <path d="M45 298H57M45 290V307M39 294V303M161 222H178M165 216H174M169 222V234"/>
            <path d="M561 154V176M554 176H569M558 180H565M561 180V202M561 210V222M553 246H570M557 240H566M561 246V258M561 554V566M41 498V510M41 534V558"/>
            <use href="#gnd" x="561" y="222"/><use href="#gnd" x="561" y="566"/><use href="#gnd" x="41" y="558"/>
            <path d="M329 266V314"/><path class="solid" d="M320 284H339V287H322V289H320ZM337 282H339V284H337ZM329 286L338 294H320Z"/>
            <path d="M425 354H473M443 348L456 360M443 360L456 348"/><path class="solid" d="M438 354L442 350V358ZM457 354L461 350V358Z"/>
            <circle cx="41" cy="522" r="11.700" class="round"/><path class="round" d="M35 523Q38 516 41 522T48 521"/><path d="M32 505H37M34 503V508M32 539H37"/>
          </g>
          <g class="dots">
            <use href="#node" x="233" y="138"/><use href="#node" x="473" y="138"/><use href="#node" x="233" y="186"/><use href="#node" x="233" y="250"/><use href="#node" x="297" y="250"/><use href="#node" x="329" y="250"/><use href="#node" x="377" y="274"/><use href="#node" x="417" y="274"/><use href="#node" x="113" y="298"/><use href="#node" x="169" y="354"/><use href="#node" x="233" y="354"/><use href="#node" x="329" y="354"/><use href="#node" x="473" y="354"/><use href="#node" x="561" y="354"/><use href="#node" x="169" y="394"/><use href="#node" x="297" y="394"/><use href="#node" x="377" y="394"/><use href="#node" x="417" y="394"/><use href="#node" x="41" y="426"/><use href="#node" x="113" y="426"/><use href="#node" x="169" y="474"/><use href="#node" x="377" y="474"/><use href="#node" x="561" y="474"/><use href="#node" x="169" y="546"/><use href="#node" x="297" y="546"/><use href="#node" x="377" y="546"/><use href="#node" x="473" y="546"/><use href="#node" x="561" y="546"/>
          </g>
          <g class="label">
            <text x="241" y="158">R7</text><text x="240" y="175">47</text>
            <text x="121" y="212">R1</text><text x="122" y="229">12k</text>
            <text x="204" y="214">R8</text><text x="201" y="229">270</text>
            <text x="177" y="252">R4</text><text x="178" y="269">120</text>
            <text x="257" y="240">R9</text><text x="255" y="271">6.8k</text>
            <text x="72" y="285">C1</text><text x="67" y="322">100u</text>
            <text x="184" y="308">470u</text><text x="183" y="324">C3</text>
            <text x="247" y="310">C5</text><text x="242" y="326">470u</text>
            <text x="193" y="344">R6</text><text x="189" y="374">2.2k</text>
            <text x="124" y="359">R2</text><text x="122" y="375">100k</text>
            <text x="72" y="413">C2</text><text x="79" y="449">1u</text>
            <text x="52" y="463">Ri</text><text x="53" y="479">50</text>
            <text x="61" y="528">V1</text>
            <text x="121" y="508">R3</text><text x="122" y="525">100k</text>
            <text x="177" y="508">R5</text><text x="177" y="525">8.2k</text>
            <text x="225" y="381">C4</text><text x="224" y="419">390p</text>
            <text x="175" y="465">Q1</text><text x="179" y="489">2N3906C</text>
            <text x="256" y="491">Q2</text><text x="233" y="508">BC182</text>
            <text x="344" y="289">D1</text>
            <text x="385" y="235">Q3</text><text x="386" y="253">2N3054</text>
            <text x="342" y="319">R10</text><text x="346" y="333">44</text>
            <text x="430" y="320">C7</text><text x="422" y="335">470u</text>
            <text x="479" y="242">MJL3281C</text><text x="481" y="259">Q4</text>
            <text x="578" y="175">V2</text><text x="576" y="191">47V</text>
            <text x="519" y="274">C8</text><text x="515" y="288">100n</text>
            <text x="481" y="316">R13</text><text x="482" y="333">0.82</text>
            <text x="569" y="324">R15</text><text x="570" y="341">8.2</text>
            <text x="420" y="375">Probe1</text>
            <text x="341" y="393">C6</text><text x="336" y="420">470u</text>
            <text x="385" y="438">R11</text><text x="384" y="455">430</text>
            <text x="385" y="502">R12</text><text x="384" y="519">150</text>
            <text x="481" y="380">R14</text><text x="482" y="397">0.82</text>
            <text x="515" y="422">4.7m</text><text x="519" y="436">C9</text>
            <text x="480" y="447">Q5</text><text x="479" y="464">MJL1302C</text>
            <text x="572" y="513">RL</text><text x="573" y="527">8</text>
            <text x="40" y="425" class="net">in</text><text x="561" y="473" class="net">out</text>
          </g>
        </svg>
        </div>
        <div class="vscroll">
          <span class="split"></span>
          <button class="sb" aria-label="Scroll up"><svg><use href="#i-tri-u"/></svg></button>
          <span class="thumb"></span>
          <span class="track"></span>
          <button class="sb" aria-label="Scroll down"><svg><use href="#i-tri-d"/></svg></button>
        </div>
      </div>
      <div class="foot">
        <nav class="tabs">
          <div class="vcr">
            <button class="sb" aria-label="First page"><svg><use href="#i-first"/></svg></button>
            <button class="sb" aria-label="Previous page"><svg><use href="#i-tri-l"/></svg></button>
            <button class="sb" aria-label="Next page"><svg><use href="#i-tri-r"/></svg></button>
            <button class="sb" aria-label="Last page"><svg><use href="#i-last"/></svg></button>
          </div>
          <svg class="slant" viewBox="0 0 9 16"><path class="lit" d="M0 0H9V16H7Z"/><path d="M1 0L8 16"/></svg>
          <a class="tab sel" href="#main">Main</a>
          <svg class="slant" viewBox="0 0 9 16"><path class="lit" d="M0 0H8L1 16H0Z"/><path d="M1 16L8 0M8 .5H9M4 9L7 16"/></svg>
          <a class="tab" href="#text">Text</a>
          <svg class="slant" viewBox="0 0 9 16"><path d="M0 .5H9M1 0L8 16M4 8L1 16"/></svg>
          <a class="tab" href="#models">Models</a>
          <svg class="slant" viewBox="0 0 9 16"><path d="M0 .5H9M1 0L8 16M4 8L1 16"/></svg>
          <a class="tab wide" href="#power">Power Supplies</a>
          <svg class="slant" viewBox="0 0 9 16"><path d="M0 .5H9M1 0L8 16M4 8L1 16"/></svg>
          <a class="tab" href="#info">Info</a>
          <svg class="slant" viewBox="0 0 9 16"><path d="M0 .5H9M1 16L8 0"/></svg>
          <span class="rest"></span>
        </nav>
        <div class="hscroll">
          <button class="sb" aria-label="Scroll left"><svg><use href="#i-tri-l"/></svg></button>
          <span class="thumb"></span>
          <span class="track"></span>
          <button class="sb" aria-label="Scroll right"><svg><use href="#i-tri-r"/></svg></button>
        </div>
        <span class="corner"></span>
      </div>
    </div></div>
  </div>
</section>

<section class="win" aria-label="Analysis">
  <header class="bar">
    <svg class="app" viewBox="0 0 16 16"><rect x=".5" y=".5" width="15" height="15" fill="#fff" stroke="#000"/><path d="M1 2.500H15" stroke="#0000c8" stroke-width="3"/><path d="M2 5.500H14M2 9h1M2 12h1" stroke="#999"/><rect x="4.500" y="6.500" width="10" height="7" fill="#18e0e0" stroke="#000"/><path d="M6 11l2-2h3l2 2" stroke="#000" fill="none"/></svg>
    <h2 class="title">AC Analysis</h2>
    <button class="cap" aria-label="Minimize"><svg><use href="#i-min"/></svg></button>
    <button class="cap" aria-label="Restore"><svg><use href="#i-max"/></svg></button>
    <button class="cap" aria-label="Close"><svg><use href="#i-close"/></svg></button>
  </header>
  <div class="client">
    <div class="tools lined">
      <button class="tb" aria-label="Select"><svg><use href="#i-cursor"/></svg></button>
      <button class="tb" aria-label="Graphics"><svg><use href="#i-shapes"/></svg></button>
      <button class="dd" aria-label="More graphics"><svg><use href="#i-caret"/></svg></button>
      <button class="tb on" aria-label="Scale"><svg><use href="#i-pzoom"/></svg></button>
      <button class="tb" aria-label="Cursor"><svg><use href="#i-pcur"/></svg></button>
      <button class="tb" aria-label="Horizontal tag"><svg><use href="#i-ph"/></svg></button>
      <button class="tb" aria-label="Vertical tag"><svg><use href="#i-pv"/></svg></button>
      <button class="tb" aria-label="Point tag"><svg><use href="#i-pt"/></svg></button>
      <button class="tb" aria-label="Performance tag"><svg><use href="#i-pf"/></svg></button>
      <button class="tb" aria-label="Text"><svg><use href="#i-t"/></svg></button>
      <span class="sep"></span>
      <button class="tb" aria-label="Properties"><svg><use href="#i-props"/></svg></button>
      <span class="sep"></span>
      <button class="tb" aria-label="Run"><svg><use href="#i-play"/></svg></button>
      <button class="tb" aria-label="Stop"><svg><use href="#i-halt"/></svg></button>
      <button class="tb" aria-label="Pause"><svg><use href="#i-pause"/></svg></button>
      <span class="sep"></span>
      <button class="tb" aria-label="Data points"><svg><use href="#i-dots"/></svg></button>
      <button class="tb" aria-label="Tokens"><svg><use href="#i-rings"/></svg></button>
      <span class="sep"></span>
      <button class="tb" aria-label="Ruler"><svg><use href="#i-region"/></svg></button>
      <button class="tb" aria-label="Plus mark"><svg><use href="#i-plus4"/></svg></button>
      <span class="sep"></span>
      <button class="tb on" aria-label="Horizontal axis grids"><svg><use href="#i-vbars"/></svg></button>
      <button class="tb on" aria-label="Vertical axis grids"><svg><use href="#i-hbars"/></svg></button>
      <button class="tb on" aria-label="Minor log grids"><svg><use href="#i-logbars"/></svg></button>
      <button class="tb" aria-label="Minor log grids 2"><svg><use href="#i-2bars"/></svg></button>
      <span class="sep"></span>
      <button class="tb" aria-label="Baseline"><svg><use href="#i-base"/></svg></button>
      <button class="tb" aria-label="Horizontal cursor"><svg><use href="#i-cross"/></svg></button>
      <span class="sep"></span>
    </div>
    <div class="tools lined">
      <button class="tb" aria-label="Go to X"><svg><use href="#i-lx"/></svg></button>
      <button class="tb" aria-label="Go to Y"><svg><use href="#i-ly"/></svg></button>
      <button class="tb" aria-label="Go to performance"><svg><use href="#i-lf"/></svg></button>
      <button class="tb" aria-label="Go to branch"><svg><use href="#i-ll"/></svg></button>
      <span class="sep"></span>
      <button class="tb" aria-label="Clear plots"><svg><use href="#i-erase"/></svg></button>
      <span class="sep"></span>
      <button class="tb on" aria-label="Next data point"><svg><use href="#i-c1"/></svg></button>
      <button class="tb" aria-label="Next interpolated point"><svg><use href="#i-c2"/></svg></button>
      <button class="tb" aria-label="Peak"><svg><use href="#i-c3"/></svg></button>
      <button class="tb" aria-label="Valley"><svg><use href="#i-c4"/></svg></button>
      <button class="tb" aria-label="High"><svg><use href="#i-c5"/></svg></button>
      <button class="tb" aria-label="Low"><svg><use href="#i-c6"/></svg></button>
      <button class="tb" aria-label="Inflection"><svg><use href="#i-c7"/></svg></button>
      <button class="tb" aria-label="Global high"><svg><use href="#i-c8"/></svg></button>
      <button class="tb" aria-label="Global low"><svg><use href="#i-c9"/></svg></button>
      <button class="tb" aria-label="Top"><svg><use href="#i-c10"/></svg></button>
      <button class="tb" aria-label="Bottom"><svg><use href="#i-c11"/></svg></button>
      <span class="sep"></span>
      <button class="tb" aria-label="Copy to clipboard"><svg><use href="#i-paste"/></svg></button>
      <button class="dd" aria-label="Copy options"><svg><use href="#i-caret"/></svg></button>
      <span class="sep"></span>
      <button class="tb" aria-label="Plot list"><svg><use href="#i-list"/></svg></button>
      <span class="sep"></span>
      <button class="tb" aria-label="Numeric output"><svg><use href="#i-123"/></svg></button>
      <span class="sep"></span>
      <button class="tb on" aria-label="Same Y scales"><svg><use href="#i-hlim"/></svg></button>
      <button class="tb on" aria-label="Align cursors"><svg><use href="#i-vlim"/></svg></button>
      <span class="sep"></span>
      <button class="tb" aria-label="Zoom in"><svg><use href="#i-zin"/></svg></button>
      <button class="tb" aria-label="Zoom out"><svg><use href="#i-zout"/></svg></button>
      <button class="tb" aria-label="Zoom 100"><svg><use href="#i-z100"/></svg></button>
      <span class="sep"></span>
    </div>
    <div class="tools">
      <button class="tb" aria-label="Color"><svg><use href="#i-cells"/></svg></button>
      <button class="dd off" aria-label="More colors"><svg><use href="#i-caret"/></svg></button>
      <button class="tb" aria-label="Font"><svg><use href="#i-a"/></svg></button>
      <span class="sep"></span>
      <button class="tb" aria-label="Bring to front"><svg><use href="#i-front"/></svg></button>
      <button class="tb" aria-label="Send to back"><svg><use href="#i-back"/></svg></button>
    </div>
    <div class="sheet"><div class="sheet-in">
      <div class="page">
        <div class="view">
        <svg class="graphs" viewBox="639 114 622 480" role="img" aria-label="AC analysis plots">
          <g class="grid">
            <use href="#decade" x="690" y="131"/><use href="#decade" x="781" y="131"/><use href="#decade" x="871" y="131"/><use href="#decade" x="962" y="131"/><use href="#decade" x="1053" y="131"/><use href="#decade" x="1143" y="131"/>
            <use href="#decade" x="690" y="282"/><use href="#decade" x="781" y="282"/><use href="#decade" x="871" y="282"/><use href="#decade" x="962" y="282"/><use href="#decade" x="1053" y="282"/><use href="#decade" x="1143" y="282"/>
            <use href="#decade-s" x="690" y="433"/><use href="#decade-s" x="781" y="433"/><use href="#decade-s" x="871" y="433"/><use href="#decade-s" x="962" y="433"/><use href="#decade-s" x="1053" y="433"/><use href="#decade-s" x="1143" y="433"/>
            <path d="M690 160H1234M690 190H1234M690 219H1234M690 305H1234M690 329H1234M690 352H1234M690 376H1234M690 440H1234M690 448H1234M690 455H1234M690 462H1234M690 470H1234M690 477H1234M690 484H1234M690 492H1234M690 499H1234M690 506H1234M690 514H1234M690 521H1234M690 528H1234M690 536H1234"/>
          </g>
          <path class="frame" d="M690 131H1234V248H690ZM690 282H1234V399H690ZM690 433H1234V543H690Z"/>
          <g class="trace">
            <path clip-path="url(#clip-a)" stroke="#00f" d="M688 148.500C705 145.500 720 144.500 750 144.500H1023C1048 145 1066 149 1081 155C1105 166 1123 177.500 1143 189C1165 201 1180 208.500 1195 208.500H1212C1220 208.500 1224 217 1236 234"/>
            <path clip-path="url(#clip-b)" stroke="#f00" d="M697 281C720 292.500 745 300 784 303.700C820 305.500 880 305.600 925 306.500C980 307.500 1020 311 1053 321.500C1090 333.500 1105 342.500 1145 342.500C1160 342 1165 340.500 1188 340.500C1212 340.500 1214 364 1235 384"/>
            <path clip-path="url(#clip-c)" stroke="#000" d="M891 431C900 456 915 470 950 474C985 477.500 1020 474 1053 491.500C1085 511 1090 543 1143 543.500C1180 544.500 1195 542 1207 540C1218 538 1225 540 1236 542.500"/>
          </g>
          <g class="tick">
            <text x="935" y="128">JLH-70.CIR</text>
            <g text-anchor="end">
              <text x="688" y="135">30.000</text><text x="688" y="164">20.000</text><text x="688" y="194">10.000</text><text x="688" y="223">0.000</text><text x="688" y="252">-10.000</text>
              <text x="688" y="286">45.000</text><text x="688" y="309">0.000</text><text x="688" y="333">-45.000</text><text x="688" y="356">-90.000</text><text x="688" y="380">-135.000</text><text x="688" y="403">-180.000</text>
              <text x="688" y="437">1.500u</text><text x="688" y="459">1.200u</text><text x="688" y="474">1.000u</text><text x="688" y="488">0.800u</text><text x="688" y="503">0.600u</text><text x="688" y="518">0.400u</text><text x="688" y="532">0.200u</text><text x="688" y="547">0.000u</text>
            </g>
            <g text-anchor="middle">
              <text x="696" y="259">10</text><text x="781" y="259">100</text><text x="872" y="259">1K</text><text x="963" y="259">10K</text><text x="1054" y="259">100K</text><text x="1144" y="259">1M</text><text x="1235" y="259">10M</text>
              <text x="696" y="410">10</text><text x="781" y="410">100</text><text x="872" y="410">1K</text><text x="963" y="410">10K</text><text x="1054" y="410">100K</text><text x="1144" y="410">1M</text><text x="1235" y="410">10M</text>
              <text x="696" y="554">10</text><text x="781" y="554">100</text><text x="872" y="554">1K</text><text x="963" y="554">10K</text><text x="1054" y="554">100K</text><text x="1144" y="554">1M</text><text x="1235" y="554">10M</text>
            </g>
            <text x="690" y="272" class="under">db(v(OUT))</text>
            <text x="690" y="423" class="red">ph(v(OUT)) (Degrees)</text>
            <text x="690" y="567" class="black">GD(v(OUT))</text>
            <text x="897" y="580">F (Hz)</text>
          </g>
        </svg>
        </div>
      </div>
      <div class="foot">
        <nav class="tabs">
          <div class="vcr">
            <button class="sb" aria-label="Page list"><svg class="tiny-ic"><use href="#i-tri-d"/></svg></button>
            <button class="sb" aria-label="First page"><svg><use href="#i-first"/></svg></button>
            <button class="sb" aria-label="Previous page"><svg><use href="#i-tri-l"/></svg></button>
            <button class="sb" aria-label="Next page"><svg><use href="#i-tri-r"/></svg></button>
            <button class="sb" aria-label="Last page"><svg><use href="#i-last"/></svg></button>
          </div>
          <svg class="slant" viewBox="0 0 9 16"><path class="lit" d="M0 0H9V16H7Z"/><path d="M1 0L8 16"/></svg>
          <a class="tab sel" href="#plots">Main</a>
          <svg class="slant" viewBox="0 0 9 16"><path class="lit" d="M0 0H8L1 16H0Z"/><path d="M1 16L8 0M8 .5H9"/></svg>
          <span class="rest"></span>
        </nav>
        <span class="grip"></span>
      </div>
    </div></div>
  </div>
</section>
</main>
</body>
</html>
```
FILE: styles.css
```css
* { box-sizing: border-box; }
body { margin: 0; background: #e4e4e4; font-family: "Open Sans", "Noto Sans", sans-serif; font-size: 12px; color: #000; }
svg { display: block; flex: none; overflow: visible; }
.defs { position: absolute; width: 0; height: 0; }
button { font: inherit; color: inherit; padding: 0; margin: 0; border: 0; background: none; display: flex; align-items: center; justify-content: center; flex: none; }

.desk { display: grid; grid-template-columns: 630fr 638fr; height: 100vh; padding-bottom: 2px; }

/* windows */
.win { display: flex; flex-direction: column; min-width: 0; background: #d7e4f2; border: solid #666; border-width: 2px 0 1px 1px; border-radius: 6px 6px 0 0; padding: 0 6px 8px; }
.win.active { background: #b9d1ea; border-left: 2px solid #666; border-right: 1px solid #111; border-bottom-color: #111; box-shadow: inset -1px -1px #3cc8e8, inset 1px 1px #e6f0fa; padding: 0 7px 8px 5px; }
.bar { display: flex; align-items: center; height: 28px; gap: 2px; padding: 5px 1px 0 2px; background: linear-gradient(#bccbdc, #d7e4f2); }
.active .bar { background: linear-gradient(#98b4d2, #b9d1ea); }
.app { width: 16px; height: 16px; }
.title { flex: 1; min-width: 0; margin: 0 0 0 2px; font-size: 12px; font-weight: 400; line-height: 16px; white-space: nowrap; overflow: hidden; color: #444; }
.active .title { color: #000; }
.cap { width: 31px; height: 17px; border: 1px solid #8a9bb5; border-radius: 2px; background: #d0deed; box-shadow: inset 0 0 0 1px #e6eef7; }
.active .cap { border-color: #53688b; background: linear-gradient(#c8d8ea 45%, #a3bad6 50%, #b9cfe6); box-shadow: inset 0 0 0 1px #d8e5f3; }
.active .cap.close { border-color: #4a1410; background: linear-gradient(#e2a094 45%, #c2452f 50%, #d0705a); box-shadow: inset 0 0 0 1px #eab2a8; }
.cap svg { width: 12px; height: 12px; }
.client { flex: 1; min-height: 0; display: flex; flex-direction: column; background: #f0f0f0; }

/* toolbars */
.tools { display: flex; gap: 1px; height: 27px; padding: 3px 3px 0; overflow: hidden; }
.tools.lined { background: linear-gradient(#a0a0a0, #a0a0a0) 5px 100% / calc(100% - 9px) 1px no-repeat; }
.tb { width: 22px; height: 22px; }
.tb svg { width: 16px; height: 16px; }
.tb.on { border: 1px solid; border-color: #808080 #fff #fff #808080; background: repeating-conic-gradient(#fff 0 25%, #f0f0f0 0 50%) 0 0 / 2px 2px; }
.dd { width: 14px; height: 22px; }
.dd svg { width: 8px; height: 4px; }
.dd.off { color: #999; }
.sep { width: 4px; height: 18px; margin-top: 2px; background: linear-gradient(90deg, transparent 1px, #a0a0a0 1px 2px, #fff 2px 3px, transparent 3px); flex: none; }
.glyph { font-family: "Liberation Serif", serif; font-weight: 700; }
.glyph.t { font-size: 19px; }
.glyph.a { font-size: 16px; }
.glyph.mid { font-size: 12px; }
.glyph.info { font-size: 14px; fill: #fff; }
.glyph.small { font-size: 9px; }
.glyph.inv { fill: #fff; }
.glyph.num { font-size: 8px; }
.glyph.tiny { font-size: 6px; font-family: "Liberation Sans", sans-serif; }
.glyph.sans { font-size: 9px; font-family: "Liberation Sans", sans-serif; }
.glyph.it { font-style: italic; }
.navy { fill: #1f3f80; }
.grey { fill: #a0a0a0; }

/* document area */
.sheet { flex: 1; min-height: 0; margin-top: 1px; display: flex; border: solid; border-width: 1px; border-color: #a0a0a0 #fff #fff #a0a0a0; }
.sheet-in { flex: 1; min-width: 0; display: flex; flex-direction: column; border: solid #696969; border-width: 1px 0 0 1px; background: #fff; }
.page { flex: 1; min-height: 0; display: flex; }
.view { flex: 1; min-width: 0; overflow: hidden; }
.circuit { width: 595px; height: 481px; }
.graphs { width: 622px; height: 480px; }

/* scroll bars */
.sb { width: 16px; height: 16px; background: #f0f0f0; border: 1px solid; border-color: #fff #696969 #696969 #fff; box-shadow: inset -1px -1px #a0a0a0; }
.sb svg { width: 8px; height: 8px; }
.sb svg.tiny-ic { width: 6px; height: 6px; }
.vscroll { width: 17px; margin-top: 3px; display: flex; flex-direction: column; }
.vscroll .split { height: 2px; border-top: 1px solid #696969; }
.thumb { background: #f0f0f0; border: 1px solid; border-color: #fff #696969 #696969 #fff; box-shadow: inset -1px -1px #a0a0a0; }
.vscroll .thumb { flex: 0 0 22%; }
.track { flex: 1; background: repeating-conic-gradient(#fff 0 25%, #f0f0f0 0 50%) 0 0 / 2px 2px; }
.foot { display: flex; height: 17px; background: #f0f0f0; }
.hscroll { display: flex; flex: 0 0 165px; height: 16px; }
.hscroll .thumb { flex: 0 0 29px; }
.corner { width: 17px; }
.grip { width: 17px; height: 7px; border: 1px solid; border-color: #fff #696969 #696969 #fff; background: #f0f0f0; }

/* page tabs */
.tabs { display: flex; flex: 1; min-width: 0; overflow: hidden; font-family: Roboto, "Open Sans", sans-serif; font-size: 11px; line-height: 15px; }
.active .tabs { border-right: 1px solid #000; margin-right: 3px; }
.vcr { display: flex; background: #696969; border-left: 4px solid #f0f0f0; }
.win:not(.active) .vcr { border-left-width: 7px; }
.slant { width: 9px; height: 16px; }
.slant path { fill: none; stroke: #000; }
.slant .lit { fill: #fff; stroke: none; }
.tab { color: #000; text-decoration: none; white-space: nowrap; padding: 0 2px; border-top: 1px solid #000; }
.tab.sel { font-weight: 700; background: #fff; border-top-color: #fff; border-bottom: 1px solid #a0a0a0; padding: 0 1px; }
.tab.wide { padding: 0 7px; }
.rest { flex: 1; border-top: 1px solid #000; }

/* line work sits on pixel centres so that 1px strokes stay sharp */
.wire, .part, .dots, .grid, .frame { transform: translate(0.5px, 0.5px); }

/* schematic */
.wire, .part { fill: none; shape-rendering: crispEdges; }
.wire { stroke: #008000; }
.part { stroke: #00f; }
.solid { fill: #00f; stroke: none; }
.round { shape-rendering: auto; }
.dots { fill: #f00; }
.label { fill: #008000; font-family: "DejaVu Sans", sans-serif; font-size: 13px; }
.label .net { fill: #00f; }

/* plots */
.grid { fill: none; stroke: #808080; stroke-dasharray: 3 3; shape-rendering: crispEdges; }
.frame { fill: none; stroke: #808080; shape-rendering: crispEdges; }
.trace { fill: none; stroke-width: 3; stroke-linejoin: round; }
.tick { fill: #00f; font-family: "Liberation Sans", sans-serif; font-size: 10px; }
.under { text-decoration: underline; }
.tick .red { fill: #f00; }
.tick .black { fill: #000; }
```
